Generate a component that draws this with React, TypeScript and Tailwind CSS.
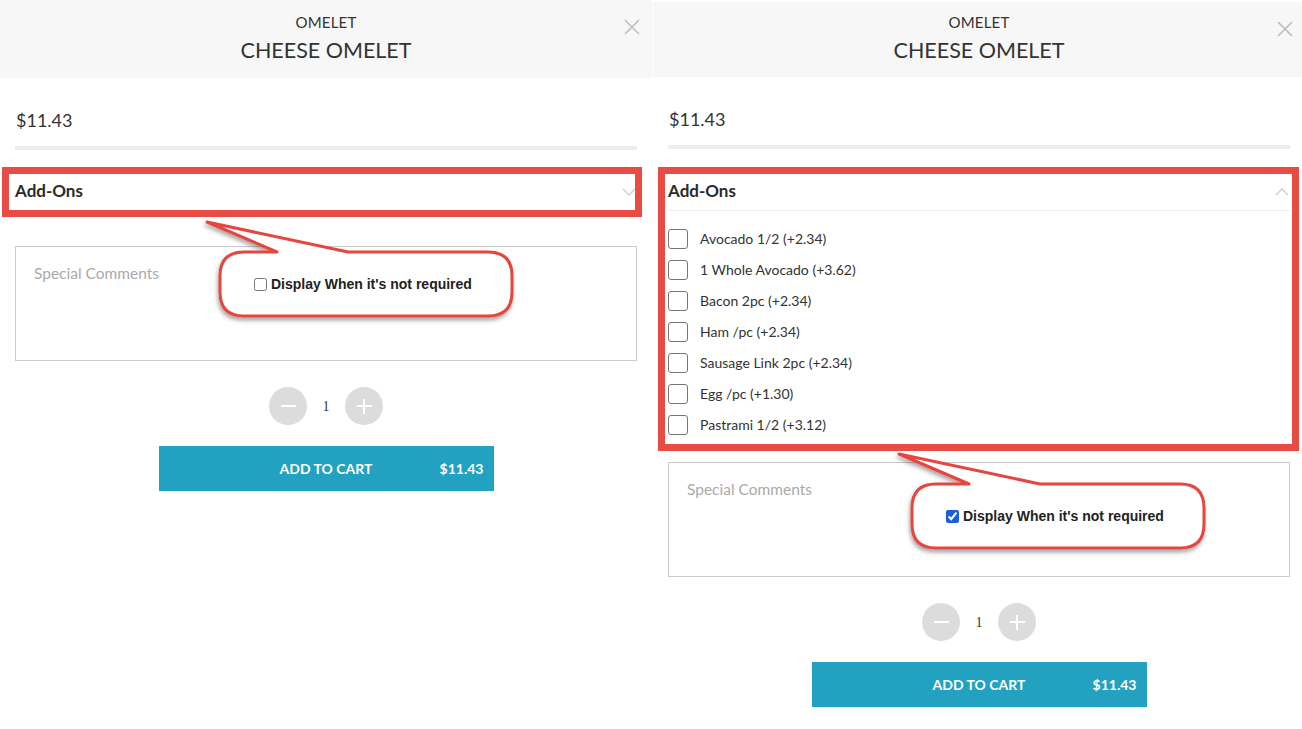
import React from "react";

const addOns = [
  "Avocado 1/2 (+2.34)",
  "1 Whole Avocado (+3.62)",
  "Bacon 2pc (+2.34)",
  "Ham /pc (+2.34)",
  "Sausage Link 2pc (+2.34)",
  "Egg /pc (+1.30)",
  "Pastrami 1/2 (+3.12)",
];

const CloseIcon = () => (
  <svg width="16" height="16" viewBox="0 0 16 16" className="block">
    <path d="M1 1 L15 15 M15 1 L1 15" stroke="#bdbdbd" strokeWidth="1.6" fill="none" />
  </svg>
);

const Chevron = ({ up }: { up?: boolean }) => (
  <svg width="14" height="8" viewBox="0 0 14 8" className="block">
    <path
      d={up ? "M1 7 L7 1 L13 7" : "M1 1 L7 7 L13 1"}
      stroke="#d2d2d2"
      strokeWidth="1.6"
      fill="none"
    />
  </svg>
);

interface CalloutProps {
  pos: string;
  checked?: boolean;
  id: string;
}

// annotation bubble drawn over the page
const Callout = ({ pos, checked, id }: CalloutProps) => (
  <div className={`absolute w-[320px] h-[110px] pointer-events-none ${pos}`}>
    <svg width="320" height="110" viewBox="0 0 320 110" className="absolute inset-0">
      <defs>
        <filter id={id} x="-10%" y="-10%" width="120%" height="130%">
          <feDropShadow dx="-1" dy="3" stdDeviation="2" floodColor="#000" floodOpacity="0.35" />
        </filter>
      </defs>
      <path
        d="M44 37 L77 37 L7 7 L148 37 L288 37 Q312 37 312 61 L312 77 Q312 101 288 101 L44 101 Q20 101 20 77 L20 61 Q20 37 44 37 Z"
        fill="#fff"
        stroke="#e5463f"
        strokeWidth="3"
        strokeLinejoin="round"
        filter={`url(#${id})`}
      />
    </svg>
    <label className="absolute left-[54px] top-[61px] flex items-center gap-[4px] font-['Liberation_Sans',Arial,sans-serif] text-[14px] font-bold text-[#222] leading-[16px]">
      <input
        type="checkbox"
        checked={!!checked}
        readOnly
        className="m-0 w-[13px] h-[13px] accent-[#1a5fd6]"
      />
      Display When it's not required
    </label>
  </div>
);

interface PanelProps {
  expanded?: boolean;
}

const Panel = ({ expanded }: PanelProps) => {
  return (
    <div
      className={`relative w-[652px] shrink-0 bg-white font-['Lato',sans-serif] text-[#333] ${
        expanded ? "pt-[2px]" : ""
      }`}
    >
      <div
        className={`relative flex flex-col items-center bg-[#f7f7f7] ${
          expanded ? "h-[75px]" : "h-[78px]"
        }`}
      >
        <div
          className={`text-[15px] leading-[18px] tracking-[0.2px] ${
            expanded ? "mt-[11px]" : "mt-[13px]"
          }`}
        >
          OMELET
        </div>
        <div className="mt-[5px] text-[21.5px] leading-[28px]">CHEESE OMELET</div>
        <button className="absolute right-[12px] top-[19px]">
          <CloseIcon />
        </button>
      </div>

      <div className="px-[15px]">
        <div className="mt-[30px] pl-[1px] text-[18px] leading-[24px]">$11.43</div>
        <div className="mt-[14px] h-[4px] bg-[#ededed]" />

        <div className={`relative ${expanded ? "mt-[24px]" : "mt-[23px]"}`}>
          <div
            className={`flex h-[38px] items-center justify-between ${
              expanded ? "border-b border-[#ececec]" : ""
            }`}
          >
            <span className="-mt-[2px] text-[17px] font-bold leading-[20px] text-[#2b2b2b]">Add-Ons</span>
            <span className="mr-[1px]">
              <Chevron up={expanded} />
            </span>
          </div>
          {expanded && (
            <ul className="pt-[12px] pb-[1px]">
              {addOns.map((item) => (
                <li key={item} className="flex h-[31px] items-center gap-[12px]">
                  <span className="h-[20px] w-[20px] rounded-[3px] border border-[#767676] bg-white" />
                  <span className="text-[14px] leading-[18px]">{item}</span>
                </li>
              ))}
            </ul>
          )}
          {/* highlight frame */}
          <div
            className={`pointer-events-none absolute border-[7px] border-[#e94b45] ${
              expanded
                ? "-left-[10px] -right-[9px] -top-[6px] -bottom-[10px]"
                : "-left-[13px] -right-[5px] -top-[6px] -bottom-[6px]"
            }`}
          />
        </div>

        <textarea
          placeholder="Special Comments"
          className={`block h-[115px] w-full resize-none border border-[#cccccc] px-[18px] py-[16px] text-[15.5px] leading-[20px] outline-none placeholder:text-[#aaaaaa] ${
            expanded ? "mt-[21px]" : "mt-[35px]"
          }`}
        />

        <div className="mt-[26px] flex items-center justify-center gap-[14px]">
          <button className="flex h-[38px] w-[38px] items-center justify-center rounded-full bg-[#dcdcdc]">
            <span className="block h-[2px] w-[15px] bg-white" />
          </button>
          <span className="w-[10px] text-center text-[14px] font-['Liberation_Serif',serif]">1</span>
          <button className="relative flex h-[38px] w-[38px] items-center justify-center rounded-full bg-[#dcdcdc]">
            <span className="block h-[2px] w-[15px] bg-white" />
            <span className="absolute block h-[15px] w-[2px] bg-white" />
          </button>
        </div>

        <div className="mt-[21px] flex justify-center">
          <button className="grid h-[45px] w-[335px] grid-cols-[1fr_auto_1fr] items-center bg-[#23a1c0] text-[14px] font-bold text-white">
            <span />
            <span>ADD TO CART</span>
            <span className="pr-[10px] text-right">$11.43</span>
          </button>
        </div>
      </div>

      {expanded ? (
        <Callout pos="left-[239px] top-[447px]" checked id="shadow-right" />
      ) : (
        <Callout pos="left-[200px] top-[215px]" id="shadow-left" />
      )}
    </div>
  );
};

export default function App() {
  return (
    <div className="flex h-[729px] w-[1302px] items-start gap-[1px] overflow-hidden bg-white">
      <Panel />
      <Panel expanded />
    </div>
  );
}
